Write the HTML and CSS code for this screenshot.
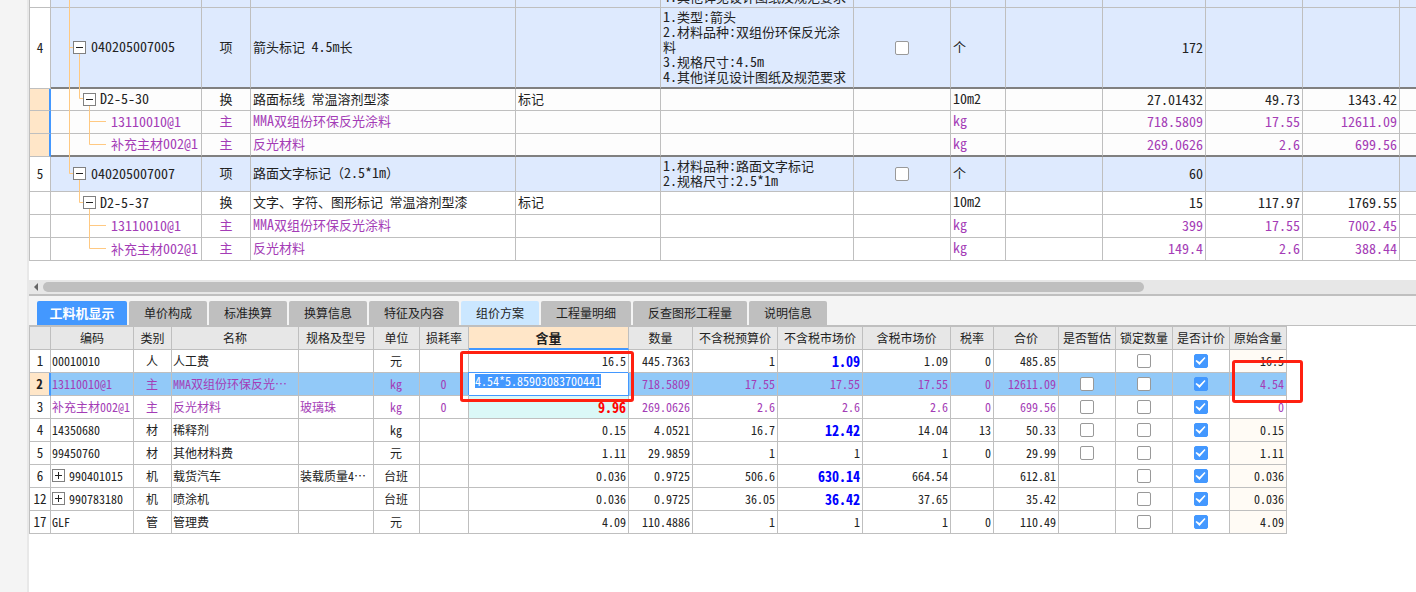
FILE: index.html
```html
<!DOCTYPE html>
<html lang="zh-CN">
<head>
<meta charset="utf-8">
<title>工料机显示</title>
<link rel="stylesheet" href="styles.css">
</head>
<body>
<div class="app">
<aside class="rail"></aside>
<main class="main">
<section class="bill">
<table class="grid bill-grid">
<colgroup><col class="w21"><col class="w151"><col class="w49"><col class="w265"><col class="w145"><col class="w193"><col class="w97"><col class="w55"><col class="w97"><col class="w103"><col class="w97"><col class="w97"><col></colgroup>
<tbody>
<tr class="item cut"><td class="no"></td><td class="code"><svg class="lines" width="60" height="8"><path d="M18.5 0V8"/></svg></td><td></td><td></td><td></td><td class="desc"><div class="clip"><span class="n">4.</span>其他详见设计图纸及规范要求</div></td><td></td><td></td><td></td><td></td><td></td><td></td><td></td></tr>
<tr class="item tall thick"><td class="no">4</td><td class="code"><svg class="lines" width="60" height="81"><path d="M18.5 0V81M18.5 39.5H23M28.5 46V81"/></svg><div class="node l1"><button class="tog" aria-label="折叠"><svg width="13" height="13"><path d="M3 6.5H10"/></svg></button><span class="n">040205007005</span></div></td><td class="c">项</td><td>箭头标记 <span class="n">4.5m</span>长</td><td></td><td class="desc"><span class="n">1.</span>类型<span class="n">:</span>箭头<br><span class="n">2.</span>材料品种<span class="n">:</span>双组份环保反光涂<br>料<br><span class="n">3.</span>规格尺寸<span class="n">:4.5m</span><br><span class="n">4.</span>其他详见设计图纸及规范要求</td><td class="c"><input type="checkbox" aria-label="主要清单 4"></td><td>个</td><td></td><td class="num">172</td><td></td><td></td><td></td></tr>
<tr class="sel first"><td class="no"></td><td class="code"><svg class="lines" width="60" height="23"><path d="M18.5 0V23M28.5 0V9.5H33M38.5 16V23"/></svg><div class="node l2"><button class="tog" aria-label="折叠"><svg width="13" height="13"><path d="M3 6.5H10"/></svg></button><span class="n">D2-5-30</span></div></td><td class="c">换</td><td>路面标线 常温溶剂型漆</td><td>标记</td><td></td><td></td><td><span class="n">10m2</span></td><td></td><td class="num">27.01432</td><td class="num">49.73</td><td class="num">1343.42</td><td></td></tr>
<tr class="sel mat"><td class="no"></td><td class="code"><svg class="lines" width="60" height="23"><path d="M18.5 0V23M38.5 0V23M38.5 10.5H55"/></svg><div class="node l3"><span class="n">13110010@1</span></div></td><td class="c">主</td><td><span class="n">MMA</span>双组份环保反光涂料</td><td></td><td></td><td></td><td><span class="n">kg</span></td><td></td><td class="num">718.5809</td><td class="num">17.55</td><td class="num">12611.09</td><td></td></tr>
<tr class="sel mat thick"><td class="no"></td><td class="code"><svg class="lines" width="60" height="23"><path d="M18.5 0V23M38.5 0V10.5H55"/></svg><div class="node l3">补充主材<span class="n">002@1</span></div></td><td class="c">主</td><td>反光材料</td><td></td><td></td><td></td><td><span class="n">kg</span></td><td></td><td class="num">269.0626</td><td class="num">2.6</td><td class="num">699.56</td><td></td></tr>
<tr class="item mid"><td class="no">5</td><td class="code"><svg class="lines" width="60" height="35"><path d="M18.5 0V16.5H23M28.5 23V35"/></svg><div class="node l1"><button class="tog" aria-label="折叠"><svg width="13" height="13"><path d="M3 6.5H10"/></svg></button><span class="n">040205007007</span></div></td><td class="c">项</td><td>路面文字标记<span class="wide">（</span><span class="n">2.5*1m</span><span class="wide">）</span></td><td></td><td class="desc"><span class="n">1.</span>材料品种<span class="n">:</span>路面文字标记<br><span class="n">2.</span>规格尺寸<span class="n">:2.5*1m</span></td><td class="c"><input type="checkbox" aria-label="主要清单 5"></td><td>个</td><td></td><td class="num">60</td><td></td><td></td><td></td></tr>
<tr><td class="no"></td><td class="code"><svg class="lines" width="60" height="23"><path d="M28.5 0V10.5H33M38.5 16V23"/></svg><div class="node l2"><button class="tog" aria-label="折叠"><svg width="13" height="13"><path d="M3 6.5H10"/></svg></button><span class="n">D2-5-37</span></div></td><td class="c">换</td><td>文字、字符、图形标记 常温溶剂型漆</td><td>标记</td><td></td><td></td><td><span class="n">10m2</span></td><td></td><td class="num">15</td><td class="num">117.97</td><td class="num">1769.55</td><td></td></tr>
<tr class="mat"><td class="no"></td><td class="code"><svg class="lines" width="60" height="23"><path d="M38.5 0V23M38.5 10.5H55"/></svg><div class="node l3"><span class="n">13110010@1</span></div></td><td class="c">主</td><td><span class="n">MMA</span>双组份环保反光涂料</td><td></td><td></td><td></td><td><span class="n">kg</span></td><td></td><td class="num">399</td><td class="num">17.55</td><td class="num">7002.45</td><td></td></tr>
<tr class="mat"><td class="no"></td><td class="code"><svg class="lines" width="60" height="23"><path d="M38.5 0V10.5H55"/></svg><div class="node l3">补充主材<span class="n">002@1</span></div></td><td class="c">主</td><td>反光材料</td><td></td><td></td><td></td><td><span class="n">kg</span></td><td></td><td class="num">149.4</td><td class="num">2.6</td><td class="num">388.44</td><td></td></tr>
</tbody>
</table>
</section>
<div class="scroll"><svg class="arrow" width="14" height="14"><path d="M9 3V11L5 7Z"/></svg><div class="thumb"></div></div>
<nav class="tabs">
<button class="tab on">工料机显示</button><button class="tab">单价构成</button><button class="tab">标准换算</button><button class="tab">换算信息</button><button class="tab">特征及内容</button><button class="tab hot">组价方案</button><button class="tab">工程量明细</button><button class="tab">反查图形工程量</button><button class="tab">说明信息</button>
</nav>
<section class="detail">
<table class="grid detail-grid">
<colgroup><col class="w21"><col class="w83"><col class="w38"><col class="w127"><col class="w75"><col class="w46"><col class="w49"><col class="w160"><col class="w64"><col class="w85"><col class="w85"><col class="w88"><col class="w43"><col class="w65"><col class="w57"><col class="w57"><col class="w57"><col class="w57"></colgroup>
<thead>
<tr><th></th><th>编码</th><th>类别</th><th>名称</th><th>规格及型号</th><th>单位</th><th>损耗率</th><th class="cur">含量</th><th>数量</th><th>不含税预算价</th><th>不含税市场价</th><th>含税市场价</th><th>税率</th><th>合价</th><th>是否暂估</th><th>锁定数量</th><th>是否计价</th><th>原始含量</th></tr>
</thead>
<tbody>
<tr><td class="no">1</td><td>00010010</td><td class="c">人</td><td>人工费</td><td></td><td class="c">元</td><td></td><td class="num">16.5</td><td class="num">445.7363</td><td class="num">1</td><td class="num edited">1.09</td><td class="num">1.09</td><td class="num">0</td><td class="num">485.85</td><td></td><td class="c"><input type="checkbox" aria-label="锁定数量"></td><td class="c"><input type="checkbox" aria-label="是否计价" checked></td><td class="num orig">16.5</td></tr>
<tr class="active mat"><td class="no">2</td><td>13110010@1</td><td class="c">主</td><td>MMA双组份环保反光…</td><td></td><td class="c">kg</td><td class="c">0</td><td class="edit"><input class="field" type="text" aria-label="含量" value="4.54*5.85903083700441"><span class="mark mark-edit"></span></td><td class="num">718.5809</td><td class="num">17.55</td><td class="num">17.55</td><td class="num">17.55</td><td class="num">0</td><td class="num">12611.09</td><td class="c"><input type="checkbox" aria-label="是否暂估"></td><td class="c"><input type="checkbox" aria-label="锁定数量"></td><td class="c"><input type="checkbox" aria-label="是否计价" checked></td><td class="num anchor">4.54<span class="mark mark-orig"></span></td></tr>
<tr class="mat"><td class="no">3</td><td>补充主材002@1</td><td class="c">主</td><td>反光材料</td><td>玻璃珠</td><td class="c">kg</td><td class="c">0</td><td class="num changed">9.96</td><td class="num">269.0626</td><td class="num">2.6</td><td class="num">2.6</td><td class="num">2.6</td><td class="num">0</td><td class="num">699.56</td><td class="c"><input type="checkbox" aria-label="是否暂估"></td><td class="c"><input type="checkbox" aria-label="锁定数量"></td><td class="c"><input type="checkbox" aria-label="是否计价" checked></td><td class="num">0</td></tr>
<tr><td class="no">4</td><td>14350680</td><td class="c">材</td><td>稀释剂</td><td></td><td class="c">kg</td><td></td><td class="num">0.15</td><td class="num">4.0521</td><td class="num">16.7</td><td class="num edited">12.42</td><td class="num">14.04</td><td class="num">13</td><td class="num">50.33</td><td class="c"><input type="checkbox" aria-label="是否暂估"></td><td class="c"><input type="checkbox" aria-label="锁定数量"></td><td class="c"><input type="checkbox" aria-label="是否计价" checked></td><td class="num orig">0.15</td></tr>
<tr><td class="no">5</td><td>99450760</td><td class="c">材</td><td>其他材料费</td><td></td><td class="c">元</td><td></td><td class="num">1.11</td><td class="num">29.9859</td><td class="num">1</td><td class="num">1</td><td class="num">1</td><td class="num">0</td><td class="num">29.99</td><td class="c"><input type="checkbox" aria-label="是否暂估"></td><td class="c"><input type="checkbox" aria-label="锁定数量"></td><td class="c"><input type="checkbox" aria-label="是否计价" checked></td><td class="num orig">1.11</td></tr>
<tr><td class="no">6</td><td><div class="node"><button class="tog" aria-label="展开"><svg width="13" height="13"><path d="M3 6.5H10M6.5 3V10"/></svg></button>990401015</div></td><td class="c">机</td><td>载货汽车</td><td>装载质量4…</td><td class="c">台班</td><td></td><td class="num">0.036</td><td class="num">0.9725</td><td class="num">506.6</td><td class="num edited">630.14</td><td class="num">664.54</td><td></td><td class="num">612.81</td><td></td><td class="c"><input type="checkbox" aria-label="锁定数量"></td><td class="c"><input type="checkbox" aria-label="是否计价" checked></td><td class="num orig">0.036</td></tr>
<tr><td class="no">12</td><td><div class="node"><button class="tog" aria-label="展开"><svg width="13" height="13"><path d="M3 6.5H10M6.5 3V10"/></svg></button>990783180</div></td><td class="c">机</td><td>喷涂机</td><td></td><td class="c">台班</td><td></td><td class="num">0.036</td><td class="num">0.9725</td><td class="num">36.05</td><td class="num edited">36.42</td><td class="num">37.65</td><td></td><td class="num">35.42</td><td></td><td class="c"><input type="checkbox" aria-label="锁定数量"></td><td class="c"><input type="checkbox" aria-label="是否计价" checked></td><td class="num orig">0.036</td></tr>
<tr><td class="no">17</td><td>GLF</td><td class="c">管</td><td>管理费</td><td></td><td class="c">元</td><td></td><td class="num">4.09</td><td class="num">110.4886</td><td class="num">1</td><td class="num">1</td><td class="num">1</td><td class="num">0</td><td class="num">110.49</td><td></td><td class="c"><input type="checkbox" aria-label="锁定数量"></td><td class="c"><input type="checkbox" aria-label="是否计价" checked></td><td class="num orig">4.09</td></tr>
</tbody>
</table>
</section>
</main>
</div>
</body>
</html>
```

FILE: styles.css
```css
* { box-sizing: border-box; }

body {
  margin: 0;
  background: #fff;
  color: #222;
  font-family: "Noto Sans CJK SC", "Liberation Sans", sans-serif;
  font-size: 12px;
  font-feature-settings: "hwid";
}

button, input { font: inherit; font-feature-settings: inherit; }

.app { display: flex; min-height: 100vh; overflow: hidden; }
.rail { flex: none; width: 29px; background: #f4f4f4; border-right: 2px solid #e8e8e8; }
.main { flex: 1; min-width: 0; }

/* Shared grid */
.grid { border-collapse: separate; border-spacing: 0; table-layout: fixed; border-left: 1px solid #bfbfbf; }
.grid td, .grid th {
  height: 23px;
  padding: 0 2px;
  border-right: 1px solid #bfbfbf;
  border-bottom: 1px solid #bfbfbf;
  line-height: 16px;
  font-weight: normal;
  text-align: left;
  white-space: nowrap;
}
.grid .c, .grid .no, .grid th { text-align: center; }
.grid .no { padding: 0; background: #fff; font-size: 13px; }
.grid .num { text-align: right; }
.mat { color: #a43cb6; }
.mat .no { color: #222; }

.w21 { width: 21px; } .w38 { width: 38px; } .w43 { width: 43px; } .w46 { width: 46px; }
.w49 { width: 49px; } .w55 { width: 55px; } .w57 { width: 57px; } .w64 { width: 64px; }
.w65 { width: 65px; } .w75 { width: 75px; } .w83 { width: 83px; } .w85 { width: 85px; }
.w88 { width: 88px; } .w97 { width: 97px; } .w103 { width: 103px; } .w127 { width: 127px; }
.w145 { width: 145px; } .w151 { width: 151px; } .w160 { width: 160px; } .w193 { width: 193px; }
.w265 { width: 265px; }

/* Bill list */
.bill { height: 280px; overflow: hidden; }
.bill-grid { width: 100%; font-size: 13px; }
.bill-grid td { padding: 0 2px 2px; }
.bill-grid td:last-child { border-right: 0; }
.bill-grid .n, .bill-grid .num { font-size: 14px; }
.bill-grid .n { line-height: 15px; }
.bill-grid tr.item td { background: #deeafe; }
.bill-grid tr.item td.no { background: #fff; }
.bill-grid tr.cut td { height: 8px; padding-bottom: 0; vertical-align: top; }
.bill-grid tr.tall td { height: 81px; }
.bill-grid tr.mid td { height: 35px; }
.bill-grid tr.first td { height: 22px; }
.bill-grid tr.thick td { border-bottom: 2px solid #808080; }
.bill-grid tr.thick td.no { border-bottom: 1px solid #bfbfbf; }
.bill-grid tr.sel td { background: #fdfdfd; }
.bill-grid tr.sel td.no { background: #ffe6c8; border-right: 2px solid #4398ff; }
.bill-grid td.desc { line-height: 15px; }
.bill-grid td:has(input) { padding-bottom: 0; }
.wide { font-feature-settings: normal; }
.clip { display: flex; align-items: flex-end; height: 4px; overflow: hidden; }

.code { position: relative; }
.bill-grid td.code { padding: 0; }
.lines { position: absolute; left: 0; top: 0; fill: none; stroke: #ffc982; }
.node { position: relative; display: flex; align-items: center; gap: 4px; }
.bill-grid .node { padding-bottom: 1px; }
.bill-grid .node .n { padding-bottom: 1px; }
.l1 { padding-left: 22px; gap: 5px; }
.l2 { padding-left: 32px; }
.l3 { padding-left: 60px; gap: 0; }

.tog { flex: none; width: 13px; height: 13px; padding: 0; border: 0; background: #fff; outline: 1px solid #808080; outline-offset: -1px; }
.tog svg { display: block; stroke: #222; fill: none; }

/* Check boxes */
input[type="checkbox"] {
  appearance: none;
  display: block;
  width: 14px;
  height: 14px;
  margin: 0 auto;
  border: 1px solid #999;
  border-radius: 2px;
  background: #fff;
}
input[type="checkbox"]:checked { border-color: #4398ff; background: #4398ff; }
input[type="checkbox"]:checked::before {
  content: "";
  display: block;
  width: 12px;
  height: 12px;
  background: #fff;
  clip-path: polygon(1px 6px, 2px 5px, 5px 7px, 10px 2px, 11px 3px, 5px 10px);
}

/* Horizontal scroll bar */
.scroll { display: flex; align-items: center; height: 16px; background: #e7e7e7; border-bottom: 2px solid #bfbfbf; }
.arrow { flex: none; fill: #666; }
.thumb { width: 79.4%; height: 10px; border-radius: 5px; background: #bfbfbf; }

/* Tabs */
.tabs { display: flex; gap: 2px; height: 30px; padding: 5px 8px 0; background: #f4f4f4; border-bottom: 1px solid #bfbfbf; }
.tab { padding: 0 15px; border: 0; border-radius: 2px 2px 0 0; background: #bfbfbf; color: #222; line-height: 16px; }
.tab.on { width: 90px; padding: 0; background: #4398ff; color: #fff; font-size: 13px; font-weight: bold; }
.tab.hot { background: #cbe7ff; }

/* Resource detail */
.detail-grid { width: 1258px; border-top: 1px solid #bfbfbf; }
.detail-grid td { padding: 0 2px 1px 1px; }
.detail-grid td:has(input) { padding-bottom: 0; }
.detail-grid th { padding: 0; background: #e7e7e7; }
.detail-grid th.cur { background: #ffe6c8; border-bottom: 2px solid #4398ff; font-size: 13px; font-weight: bold; }
.detail-grid td.edited { color: #00f; font-size: 14px; font-weight: bold; }
.detail-grid td.changed { background: #dbf8f7; color: #f00; font-size: 14px; font-weight: bold; }
.detail-grid td.orig { background: #fffbf5; }
.detail-grid tr.active td { background: #92c9f8; }
.detail-grid tr.active td.no { background: #ffe6c8; border-right: 2px solid #4398ff; font-weight: bold; }
.detail-grid tr.active td.edit { position: relative; padding: 0 6px; background: #fff; border-right-color: #4398ff; border-bottom-color: #4398ff; box-shadow: -1px -1px 0 #4398ff; vertical-align: top; }
.detail-grid td.anchor { position: relative; }
.field { display: block; width: 126px; height: 14px; margin-top: 1px; padding: 0; border: 0; background: #4398ff; color: #fff; line-height: 14px; }

.mark { position: absolute; z-index: 1; border: 3px solid #ff2010; border-radius: 3px; pointer-events: none; }
.mark-edit { inset: -22px -6px -7px -9px; }
.mark-orig { inset: -13px -17px -8px 2px; }
```
